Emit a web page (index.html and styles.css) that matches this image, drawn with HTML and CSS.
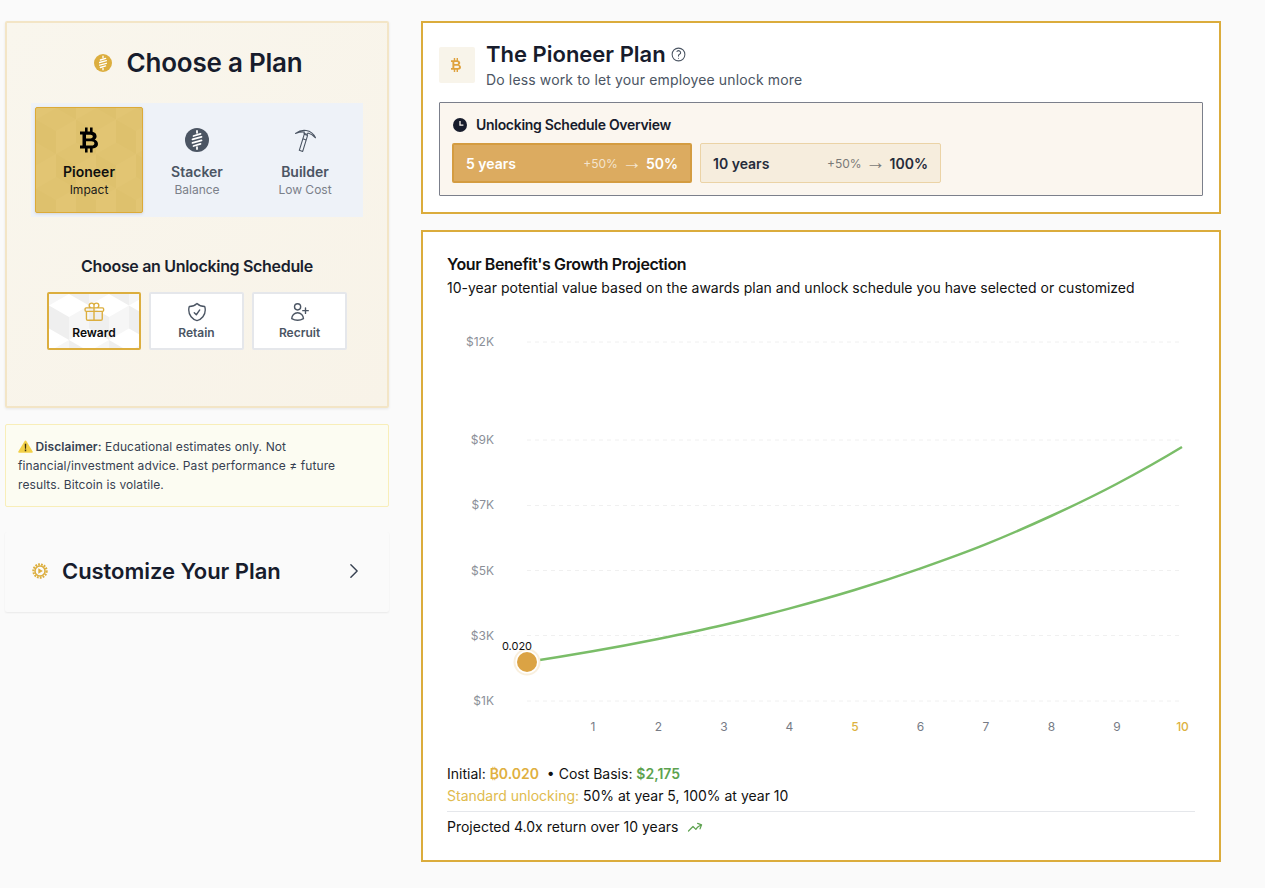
FILE: index.html
```html
<!DOCTYPE html>
<html lang="en">
<head>
<meta charset="utf-8">
<title>The Pioneer Plan</title>
<link rel="stylesheet" href="styles.css">
</head>
<body>
<svg class="defs" width="0" height="0" aria-hidden="true">
  <defs>
    <symbol id="btc" viewBox="0 0 18 25">
      <path fill-rule="evenodd" d="M5 0h2.600v4H10V0h2.600v4.200C15 4.800 16.600 6.400 16.600 8.700c0 1.500-.7 2.700-2 3.400 2 .7 3.400 2.300 3.400 4.500 0 2.500-1.800 4.100-5.400 4.300V25H10v-4H7.600v4H5v-4H0v-3h2.500V7H0V4h5V0ZM6 7.200v3.700h4.500c1.400 0 2.300-.8 2.300-1.900s-.9-1.800-2.300-1.800H6Zm0 6.600V18h5.500c1.800 0 2.900-.9 2.900-2.100 0-1.200-1.100-2.100-2.900-2.100H6Z"/>
    </symbol>
    <symbol id="stack" viewBox="0 0 24 24">
      <circle cx="12" cy="12" r="12" fill="currentColor"/>
      <path fill="none" stroke="#fff" stroke-width="1.800" stroke-linecap="round" d="M12 3v1.800M8.500 8l7-2.200M7.500 11.300l9-2.500M7.500 14.900l9-2.500M8.500 18l7-2.200M12 19.200V21"/>
    </symbol>
    <g id="cube-gold">
      <path class="gold-l" d="M0 11.500 20 23v23L0 34.500Z"/>
      <path class="gold-r" d="M40 11.500 20 23v23l20-11.500Z"/>
    </g>
    <g id="cube-grey">
      <path class="grey-l" d="M0 11.500 20 23v23L0 34.500Z"/>
      <path class="grey-r" d="M40 11.500 20 23v23l20-11.500Z"/>
    </g>
    <pattern id="cubes-gold" width="40" height="69" patternUnits="userSpaceOnUse">
      <use href="#cube-gold"/>
      <use href="#cube-gold" x="20" y="34.500"/>
      <use href="#cube-gold" x="-20" y="34.500"/>
      <use href="#cube-gold" x="20" y="-34.500"/>
      <use href="#cube-gold" x="-20" y="-34.500"/>
    </pattern>
    <pattern id="cubes-grey" width="40" height="69" patternUnits="userSpaceOnUse">
      <use href="#cube-grey"/>
      <use href="#cube-grey" x="20" y="34.500"/>
      <use href="#cube-grey" x="-20" y="34.500"/>
      <use href="#cube-grey" x="20" y="-34.500"/>
      <use href="#cube-grey" x="-20" y="-34.500"/>
    </pattern>
  </defs>
</svg>

<main class="page">
  <aside class="left">
    <section class="choose">
      <h1 class="choose-title">
        <svg class="coin-icon"><use href="#stack"/></svg>
        <span>Choose a Plan</span>
      </h1>
      <div class="plans">
        <button class="plan plan-on">
          <svg class="pattern" width="100%" height="100%"><rect width="100%" height="100%" fill="url(#cubes-gold)"/></svg>
          <svg class="plan-icon btc-icon"><use href="#btc"/></svg>
          <span class="plan-name">Pioneer</span>
          <span class="plan-sub">Impact</span>
        </button>
        <button class="plan">
          <svg class="plan-icon stack-icon"><use href="#stack"/></svg>
          <span class="plan-name">Stacker</span>
          <span class="plan-sub">Balance</span>
        </button>
        <button class="plan">
          <svg class="plan-icon pick-icon" viewBox="0 0 24 26" fill="none" stroke="currentColor" stroke-width="1.100" stroke-linejoin="round">
            <path d="M2.500 6.400C6 3.800 10 3 13.200 3.500c4 .6 7.400 3.200 9.300 7.300-2.600-2.700-5-4.200-7.500-4.800l-.8 1.600-3.300-1.400.5-1.200C8.400 4.800 5.500 5.300 2.500 6.400Z"/>
            <path d="M11.300 7.200l3.300 1.200-4.900 16-3.400-1.100Z"/>
            <path d="M9.900 11.800l3.200 1.100"/>
          </svg>
          <span class="plan-name">Builder</span>
          <span class="plan-sub">Low Cost</span>
        </button>
      </div>
      <h2 class="unlock-title">Choose an Unlocking Schedule</h2>
      <div class="goals">
        <button class="goal goal-on">
          <svg class="pattern" width="100%" height="100%"><rect width="100%" height="100%" fill="url(#cubes-grey)"/></svg>
          <svg class="goal-icon gift" viewBox="0 0 24 24" fill="none" stroke="currentColor" stroke-width="1.500" stroke-linecap="round" stroke-linejoin="round">
            <path d="M21 11.250v8.250a1.500 1.500 0 0 1-1.500 1.500H5.250a1.500 1.500 0 0 1-1.500-1.500v-8.250M12 4.875A2.625 2.625 0 1 0 9.375 7.500H12m0-2.625V7.500m0-2.625A2.625 2.625 0 1 1 14.625 7.500H12m0 0V21m-8.625-9.750h18c.621 0 1.125-.504 1.125-1.125v-1.500c0-.621-.504-1.125-1.125-1.125h-18c-.621 0-1.125.504-1.125 1.125v1.500c0 .621.504 1.125 1.125 1.125Z"/>
          </svg>
          <span class="goal-label">Reward</span>
        </button>
        <button class="goal">
          <svg class="goal-icon" viewBox="0 0 24 24" fill="none" stroke="currentColor" stroke-width="1.500" stroke-linecap="round" stroke-linejoin="round">
            <path d="M9 12.750 11.250 15 15 9.750m-3-7.036A11.959 11.959 0 0 1 3.598 6 11.990 11.990 0 0 0 3 9.749c0 5.592 3.824 10.290 9 11.623 5.176-1.332 9-6.030 9-11.622 0-1.310-.21-2.571-.598-3.751h-.152c-3.196 0-6.100-1.248-8.250-3.286Z"/>
          </svg>
          <span class="goal-label">Retain</span>
        </button>
        <button class="goal">
          <svg class="goal-icon" viewBox="0 0 24 24" fill="none" stroke="currentColor" stroke-width="1.500" stroke-linecap="round" stroke-linejoin="round">
            <path d="M18 7.500v3m0 0v3m0-3h3m-3 0h-3m-2.250-4.125a3.375 3.375 0 1 1-6.750 0 3.375 3.375 0 0 1 6.750 0ZM3 19.235v-.11a6.375 6.375 0 0 1 12.750 0v.109A12.318 12.318 0 0 1 9.374 21c-2.331 0-4.512-.645-6.374-1.766Z"/>
          </svg>
          <span class="goal-label">Recruit</span>
        </button>
      </div>
    </section>

    <p class="disclaimer">
      <svg class="warn" viewBox="0 0 16 14"><path class="warn-bg" d="M8 .5c.4 0 .7.2.9.5l6.800 11.300c.4.700 0 1.400-.8 1.400H1.100c-.8 0-1.200-.7-.8-1.400L7.100 1c.2-.3.5-.5.9-.5Z"/><path class="warn-mark" d="M7.200 4h1.600l-.2 5.300H7.400ZM7.200 10.300h1.600v1.700H7.200Z"/></svg>
      <strong>Disclaimer:</strong> Educational estimates only. Not financial/investment advice. Past performance ≠ future results. Bitcoin is volatile.
    </p>

    <button class="customize">
      <svg class="gear" viewBox="0 0 16 16">
        <circle cx="8" cy="8" r="6.600" fill="none" stroke="currentColor" stroke-width="2.200" stroke-dasharray="1.800 1.100"/>
        <circle cx="8" cy="8" r="5" fill="none" stroke="currentColor" stroke-width="1.500"/>
        <path d="M6.300 5.300 10.800 8l-4.500 2.700Z" fill="currentColor"/>
      </svg>
      <span class="customize-title">Customize Your Plan</span>
      <svg class="chev" viewBox="0 0 24 24" fill="none" stroke="currentColor" stroke-width="1.700" stroke-linecap="round" stroke-linejoin="round"><path d="m8.250 4.500 7.500 7.500-7.500 7.500"/></svg>
    </button>
  </aside>

  <div class="right">
    <section class="card plan-card">
      <header class="plan-head">
        <div class="plan-badge"><svg class="badge-btc"><use href="#btc"/></svg></div>
        <div>
          <h2 class="plan-title">The Pioneer Plan
            <svg class="help" viewBox="0 0 24 24" fill="none" stroke="currentColor" stroke-width="1.500" stroke-linecap="round" stroke-linejoin="round"><path d="M9.879 7.519c1.171-1.025 3.071-1.025 4.242 0 1.172 1.025 1.172 2.687 0 3.712-.203.179-.43.326-.67.442-.745.361-1.450.999-1.450 1.827v.750M21 12a9 9 0 1 1-18 0 9 9 0 0 1 18 0Zm-9 5.250h.008v.008H12v-.008Z"/></svg>
          </h2>
          <p class="plan-desc">Do less work to let your employee unlock more</p>
        </div>
      </header>
      <div class="overview">
        <h3 class="overview-title">
          <svg class="clock" viewBox="0 0 14 14"><circle cx="7" cy="7" r="7" fill="currentColor"/><path d="M7 3v4.200h3.400" fill="none" stroke="#fbf6ef" stroke-width="1.300"/></svg>
          Unlocking Schedule Overview
        </h3>
        <div class="steps">
          <div class="step step-on">
            <span class="step-year">5 years</span>
            <span class="step-vals"><span class="step-inc">+50%</span><span class="step-arrow">→</span><span class="step-total">50%</span></span>
          </div>
          <div class="step">
            <span class="step-year">10 years</span>
            <span class="step-vals"><span class="step-inc">+50%</span><span class="step-arrow">→</span><span class="step-total">100%</span></span>
          </div>
        </div>
      </div>
    </section>

    <section class="card chart-card">
      <h2 class="chart-title">Your Benefit's Growth Projection</h2>
      <p class="chart-sub">10-year potential value based on the awards plan and unlock schedule you have selected or customized</p>
      <svg class="chart" viewBox="447 320 748 430" width="748" height="430">
        <g class="grid">
          <path d="M527 342H1182"/><path d="M527 440H1182"/><path d="M527 505.500H1182"/><path d="M527 570.500H1182"/><path d="M527 635.500H1182"/><path d="M527 701H1182"/>
        </g>
        <g class="y-labels">
          <text x="494" y="346">$12K</text><text x="494" y="444">$9K</text><text x="494" y="509">$7K</text><text x="494" y="575">$5K</text><text x="494" y="640">$3K</text><text x="494" y="705">$1K</text>
        </g>
        <g class="x-labels">
          <text x="593" y="731">1</text><text x="658.500" y="731">2</text><text x="724" y="731">3</text><text x="789.500" y="731">4</text><text class="x-mark" x="855" y="731">5</text><text x="920.500" y="731">6</text><text x="986" y="731">7</text><text x="1051.500" y="731">8</text><text x="1117" y="731">9</text><text class="x-mark" x="1182.500" y="731">10</text>
        </g>
        <path class="curve" d="M527 662C548.800 658.700 570.700 655.100 592.500 651.300S636.200 643.400 658 639S702 630 723.500 625S767.300 614.400 789 608.600S832.800 596.600 854.500 590S898.300 576.200 920 568.600S964 553.100 985.500 544.400S1029.200 526 1051 516S1094.800 495.500 1116.500 484S1160.200 460.200 1182 447"/>
        <circle class="dot-halo" cx="527" cy="662" r="13.500"/>
        <circle class="dot-ring" cx="527" cy="662" r="11.500"/>
        <circle class="dot" cx="527" cy="662" r="10"/>
        <text class="dot-label" x="517" y="650">0.020</text>
      </svg>
      <p class="note">Initial: <b class="gold">₿0.020</b> &nbsp;• Cost Basis: <b class="green">$2,175</b></p>
      <p class="note"><span class="soft-gold">Standard unlocking:</span> 50% at year 5, 100% at year 10</p>
      <p class="note note-last">Projected 4.0x return over 10 years
        <svg class="trend" viewBox="0 0 24 24" fill="none" stroke="currentColor" stroke-width="1.800" stroke-linecap="round" stroke-linejoin="round"><path d="M2.250 18 9 11.250l4.306 4.306a11.950 11.950 0 0 1 5.814-5.518l2.740-1.220m0 0-5.940-2.281m5.940 2.280-2.280 5.941"/></svg>
      </p>
    </section>
  </div>
</main>
</body>
</html>
```
FILE: styles.css
```css
* { box-sizing: border-box; }

html, body { margin: 0; padding: 0; }

body {
  background: #fafafa;
  color: #111827;
  font-family: Inter, "Liberation Sans", sans-serif;
}

h1, h2, h3, p { margin: 0; }

button {
  font: inherit;
  color: inherit;
  cursor: pointer;
  background: none;
}

.defs { position: absolute; }

.gold-l { fill: rgba(170, 130, 40, 0.035); }
.gold-r { fill: rgba(255, 235, 170, 0.05); }
.grey-l { fill: #efefef; }
.grey-r { fill: #f6f6f6; }

.page {
  display: flex;
  gap: 32px;
  padding: 21px 44px 26px 5px;
  width: 1265px;
}

.left { width: 384px; flex: none; display: flex; flex-direction: column; }
.right { width: 800px; flex: none; display: flex; flex-direction: column; gap: 16px; }

/* Choose a plan */
.choose {
  border: 2px solid #f3e5c6;
  border-radius: 2px;
  background: linear-gradient(135deg, #f9f6ed, #f8f3e8);
  box-shadow: 0 1px 3px rgba(0, 0, 0, 0.08);
  padding: 24px 24px 56px;
}

.choose-title {
  display: flex;
  justify-content: center;
  align-items: center;
  gap: 15px;
  height: 32px;
  padding-left: 2px;
  font-size: 26px;
  font-weight: 600;
  line-height: 32px;
  letter-spacing: -0.23px;
  color: #171c2c;
}

.coin-icon { width: 18px; height: 18px; color: #dcae3e; }

.plans {
  display: flex;
  margin-top: 24px;
  padding: 4px;
  background: #eef2f8;
}

.plan {
  position: relative;
  overflow: hidden;
  width: 108px;
  height: 106px;
  padding: 20px 0 0;
  border: 0;
  border-radius: 2px;
  display: flex;
  flex-direction: column;
  align-items: center;
  color: #4b5563;
}

.plan-on {
  padding-top: 19px;
  border: 1px solid #dcaa38;
  background: #e0c370;
  box-shadow: 0 1px 3px rgba(0, 0, 0, 0.12);
  color: #0f0f0f;
}

.pattern { position: absolute; inset: 0; }

.plan-icon { position: relative; display: block; width: 26px; height: 26px; }
.btc-icon { width: 18px; fill: #000; }
.stack-icon { width: 24px; height: 24px; margin: 1px 0; }
.pick-icon { width: 24px; height: 26px; }

.plan-name {
  position: relative;
  margin-top: 9px;
  font-size: 14px;
  font-weight: 600;
  line-height: 20px;
}

.plan-sub {
  position: relative;
  font-size: 12px;
  line-height: 16px;
  color: #7b8089;
}

.plan-on .plan-sub { color: #1a1a1a; }

.unlock-title {
  margin-top: 37px;
  font-size: 16px;
  font-weight: 600;
  line-height: 24px;
  letter-spacing: -0.32px;
  text-align: center;
  color: #1a1f2e;
}

.goals {
  display: grid;
  grid-template-columns: 94px 95px 95px;
  gap: 8px;
  width: 300px;
  margin: 14px auto 0;
}

.goal {
  position: relative;
  overflow: hidden;
  height: 58px;
  padding: 7px 0 0;
  border: 2px solid #e5e7eb;
  border-radius: 2px;
  background: #fff;
  display: flex;
  flex-direction: column;
  align-items: center;
  gap: 2px;
  color: #4b5563;
}

.goal-on { border-color: #dcae3e; color: #0b0b0b; }

.goal-icon { position: relative; width: 22px; height: 22px; flex: none; }
.gift { color: #dcae3e; }

.goal-label {
  position: relative;
  font-size: 12px;
  font-weight: 600;
  line-height: 16px;
}

/* Disclaimer */
.disclaimer {
  margin-top: 16px;
  padding: 12px;
  border: 1px solid #f8eeb9;
  border-radius: 2px;
  background: #fcfcf2;
  font-size: 12px;
  line-height: 19px;
  letter-spacing: 0.1px;
  color: #374151;
}

.warn { width: 15px; height: 13px; margin-right: -1px; vertical-align: -2px; }
.warn-bg { fill: #f2d047; }
.warn-mark { fill: #3a2f10; }

.disclaimer strong { font-weight: 600; }

/* Customize */
.customize {
  margin-top: 25px;
  height: 80px;
  padding: 0 25px 2px 27px;
  border: 0;
  border-radius: 2px;
  background: #fafafa;
  box-shadow: 0 1px 2px rgba(0, 0, 0, 0.07);
  display: flex;
  align-items: center;
  text-align: left;
}

.gear { width: 16px; height: 16px; color: #dcae3e; flex: none; }

.customize-title {
  flex: 1;
  margin-left: 14px;
  font-size: 22px;
  font-weight: 600;
  letter-spacing: -0.05px;
  color: #171c2c;
}

.chev { width: 20px; height: 20px; color: #374151; flex: none; }

/* Cards */
.card {
  border: 2px solid #dbac3c;
  background: #fff;
}

.plan-card { padding: 17px 16px 16px; }

.plan-head { display: flex; align-items: center; gap: 12px; }

.plan-badge {
  width: 36px;
  height: 36px;
  flex: none;
  border-radius: 2px;
  background: #f8f4ea;
  display: flex;
  align-items: center;
  justify-content: center;
}

.badge-btc { width: 10px; height: 14px; fill: #dfa23f; margin-left: -2px; }

.plan-title {
  display: flex;
  align-items: center;
  gap: 4px;
  margin-left: -1px;
  font-size: 22px;
  font-weight: 600;
  line-height: 28px;
  color: #171c2c;
}

.help { width: 17px; height: 17px; color: #4b5563; }

.plan-desc {
  margin-top: 2px;
  margin-left: -1px;
  font-size: 14px;
  line-height: 20px;
  letter-spacing: 0.14px;
  color: #4b5563;
}

.overview {
  margin-top: 12px;
  padding: 12px;
  border: 1px solid #7b7f8b;
  border-radius: 1px;
  background: #fbf6ef;
}

.overview-title {
  display: flex;
  align-items: center;
  gap: 9px;
  padding-left: 1px;
  font-size: 14px;
  font-weight: 600;
  line-height: 20px;
  letter-spacing: -0.3px;
  color: #171c2c;
}

.clock { width: 14px; height: 14px; color: #171c2c; flex: none; }

.steps { display: flex; gap: 8px; margin-top: 8px; }

.step {
  width: 241px;
  height: 40px;
  padding: 0 12px;
  border: 1px solid #ebd3a6;
  border-radius: 2px;
  background: #f6eddd;
  display: flex;
  align-items: center;
  justify-content: space-between;
  color: #252b3a;
}

.step-on {
  width: 240px;
  border: 2px solid #d49c41;
  background: #dcab60;
  color: #fff;
}

.step-year, .step-total { font-size: 14px; font-weight: 600; }

.step-vals { display: flex; align-items: center; gap: 4px; }

.step-inc { font-size: 12px; color: #7a7a78; }
.step-arrow { margin-top: -3px; font-family: "Liberation Sans", sans-serif; font-size: 20px; line-height: 20px; color: #7a7a78; }

.step-on .step-inc, .step-on .step-arrow { color: rgba(255, 255, 255, 0.7); }

/* Chart */
.chart-card { padding: 20px 24px 22px; }

.chart-title {
  font-size: 16px;
  font-weight: 600;
  line-height: 24px;
  letter-spacing: -0.4px;
  color: #111;
}

.chart-sub {
  margin-top: 2px;
  font-size: 14px;
  line-height: 20px;
  color: #111;
}

.chart { display: block; margin: 22px 0 13px; }

.grid path { stroke: #f0f0f0; stroke-width: 1; stroke-dasharray: 4 4; fill: none; }

.y-labels text { font-size: 12px; fill: #8b8f98; text-anchor: end; }
.x-labels text { font-size: 12px; fill: #777b85; text-anchor: middle; }
.x-labels .x-mark { fill: #dcb23f; font-weight: 500; }

.curve { fill: none; stroke: #7abd68; stroke-width: 2.500; }

.dot-halo { fill: #f9efdd; }
.dot-ring { fill: #fff; }
.dot { fill: #dba344; }
.dot-label { font-size: 11px; fill: #111; text-anchor: middle; }

.note {
  font-size: 14px;
  line-height: 22px;
  color: #111;
}

.note b { font-weight: 600; }
.gold { color: #dfb040; }
.green { color: #5da24f; }
.soft-gold { color: #e0bb4e; }

.note-last {
  display: flex;
  align-items: center;
  gap: 9px;
  margin-top: 4px;
  padding-top: 4px;
  border-top: 1px solid #e5e7eb;
}

.trend { width: 16px; height: 16px; color: #5da24f; }
```
